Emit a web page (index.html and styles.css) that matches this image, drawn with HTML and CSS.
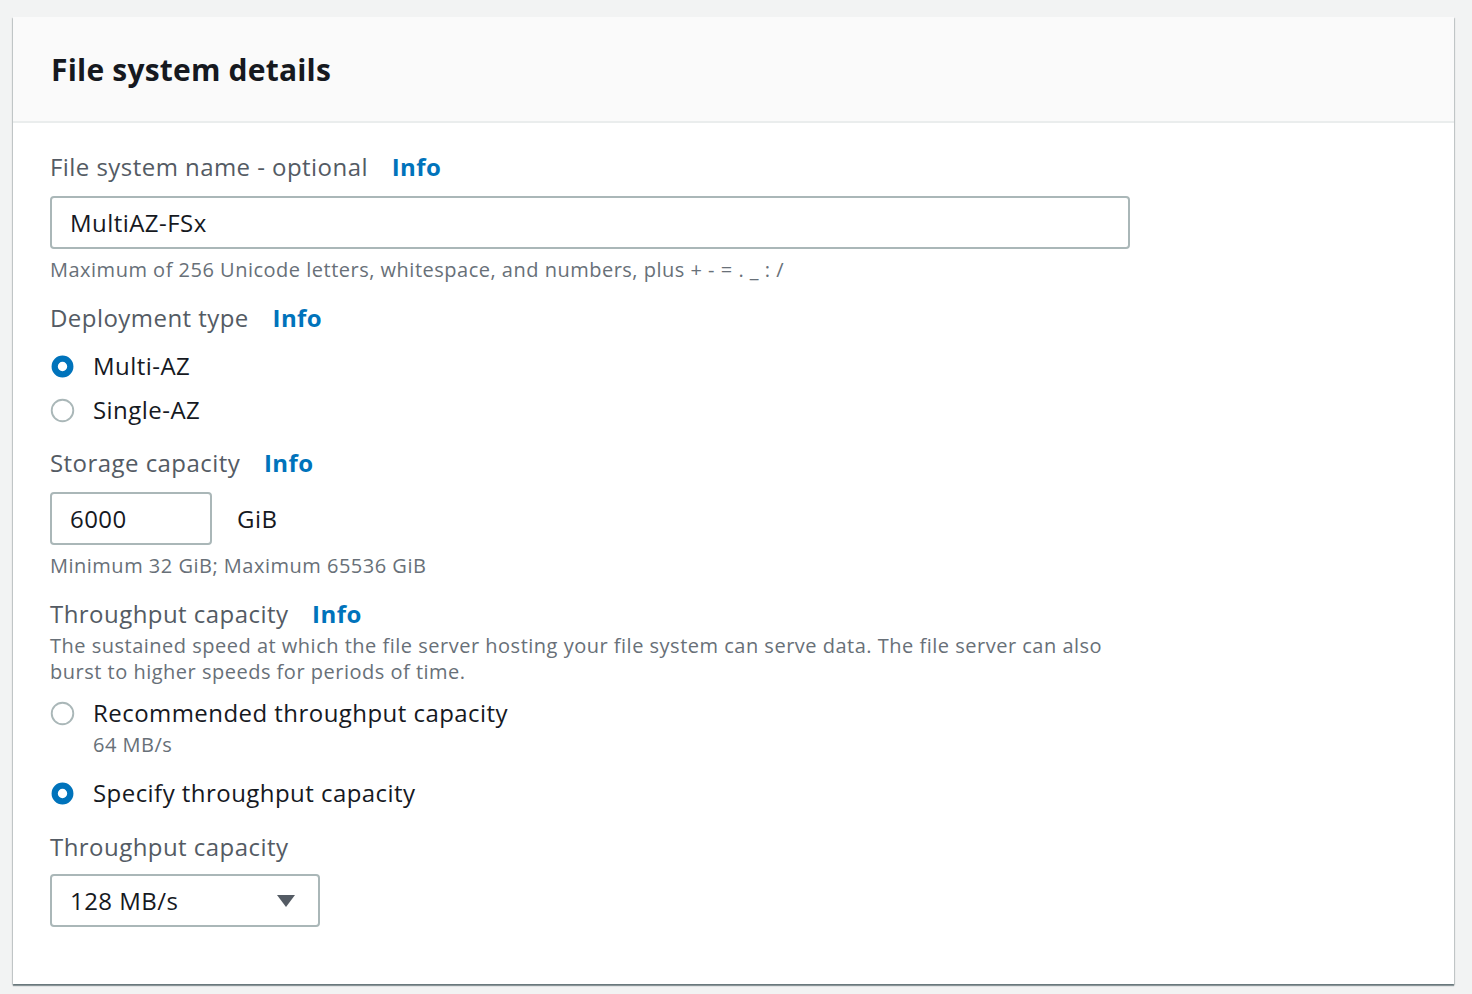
FILE: index.html
```html
<!DOCTYPE html>
<html lang="en">
<head>
    <meta charset="UTF-8">
    <title>File system details</title>
    <link rel="stylesheet" href="styles.css">
</head>
<body>
    <div class="card">
        <div class="card-header">
            <h2>File system details</h2>
        </div>
        <div class="card-body">
            <div class="field">
                <div class="field-label">File system name - optional <a class="info" href="#">Info</a></div>
                <div class="text-input wide">MultiAZ-FSx</div>
                <div class="hint">Maximum of 256 Unicode letters, whitespace, and numbers, plus + - = . _ : /</div>
            </div>

            <div class="field">
                <div class="field-label">Deployment type <a class="info" href="#">Info</a></div>
                <div class="radio-group">
                    <label class="radio">
                        <svg class="radio-icon" viewBox="0 0 16 16"><circle cx="8" cy="8" r="5" fill="#fff" stroke="#0073bb" stroke-width="4"/></svg>
                        <span>Multi-AZ</span>
                    </label>
                    <label class="radio">
                        <svg class="radio-icon" viewBox="0 0 16 16"><circle cx="8" cy="8" r="6.9" fill="#fff" stroke="#aab7b8" stroke-width="1.2"/></svg>
                        <span>Single-AZ</span>
                    </label>
                </div>
            </div>

            <div class="field">
                <div class="field-label">Storage capacity <a class="info" href="#">Info</a></div>
                <div class="input-row">
                    <div class="text-input narrow">6000</div>
                    <span class="unit">GiB</span>
                </div>
                <div class="hint">Minimum 32 GiB; Maximum 65536 GiB</div>
            </div>

            <div class="field">
                <div class="field-label">Throughput capacity <a class="info" href="#">Info</a></div>
                <div class="hint desc">The sustained speed at which the file server hosting your file system can serve data. The file server can also burst to higher speeds for periods of time.</div>
                <div class="radio-group">
                    <label class="radio">
                        <svg class="radio-icon" viewBox="0 0 16 16"><circle cx="8" cy="8" r="6.9" fill="#fff" stroke="#aab7b8" stroke-width="1.2"/></svg>
                        <span>Recommended throughput capacity
                            <span class="radio-sub">64 MB/s</span>
                        </span>
                    </label>
                    <label class="radio spaced">
                        <svg class="radio-icon" viewBox="0 0 16 16"><circle cx="8" cy="8" r="5" fill="#fff" stroke="#0073bb" stroke-width="4"/></svg>
                        <span>Specify throughput capacity</span>
                    </label>
                </div>
            </div>

            <div class="field">
                <div class="field-label plain">Throughput capacity</div>
                <div class="select">
                    <span>128 MB/s</span>
                    <svg class="caret" viewBox="0 0 20 14"><path d="M1 1h18L10 13z" fill="#545b64"/></svg>
                </div>
            </div>
        </div>
    </div>
</body>
</html>
```

FILE: styles.css
```css
* {
    margin: 0;
    padding: 0;
    box-sizing: border-box;
}

body {
    font-family: "Open Sans", "Noto Sans", Arial, sans-serif;
    background: #f2f3f3;
    color: #16191f;
    padding: 17px 18px 10px 13px;
}

.card {
    background: #fff;
    box-shadow: 0 2px 1px 0 rgba(0, 28, 36, 0.4), 1px 1px 1px 0 rgba(0, 28, 36, 0.15), -1px 1px 1px 0 rgba(0, 28, 36, 0.15);
}

.card-header {
    background: #fafafa;
    border-bottom: 2px solid #eaeded;
    height: 106px;
    padding: 0 38px;
    display: flex;
    align-items: center;
}

.card-header h2 {
    font-size: 30px;
    font-weight: 700;
    letter-spacing: 0.2px;
    margin-top: 0;
}

.card-body {
    padding: 28px 37px 57px;
}

.field {
    margin-bottom: 18px;
}

.field:last-child {
    margin-bottom: 0;
}

.field-label {
    font-size: 24px;
    line-height: 32px;
    letter-spacing: 0.45px;
    color: #545b64;
    margin-bottom: 13px;
}

.field-label.plain {
    margin-bottom: 11px;
}

.info {
    color: #0073bb;
    font-weight: 700;
    text-decoration: none;
    margin-left: 17px;
}

.text-input,
.select {
    border: 2px solid #aab7b8;
    border-radius: 4px;
    height: 53px;
    padding: 0 18px;
    display: flex;
    align-items: center;
    font-size: 24px;
    letter-spacing: 0.45px;
    color: #16191f;
}

.text-input.wide {
    width: 1080px;
}

.text-input.narrow {
    width: 162px;
}

.hint {
    font-size: 20px;
    line-height: 28px;
    letter-spacing: 0.5px;
    color: #687078;
    margin-top: 7px;
}

.hint.desc {
    line-height: 26px;
    margin-top: -10px;
    max-width: 1060px;
}

.input-row {
    display: flex;
    align-items: center;
}

.unit {
    font-size: 24px;
    letter-spacing: 0.45px;
    margin-left: 25px;
}

.field-label + .radio-group {
    margin-top: -3px;
    margin-bottom: -3px;
}

.hint + .radio-group {
    margin-top: 6px;
    margin-bottom: -2px;
}

.radio {
    display: flex;
    align-items: flex-start;
    font-size: 24px;
    line-height: 32px;
    letter-spacing: 0.45px;
    padding: 6px 0;
}

.radio.spaced {
    margin-top: 7px;
}

.radio-icon {
    width: 25px;
    height: 25px;
    margin: 4px 18px 0 0;
    flex-shrink: 0;
}

.radio-sub {
    display: block;
    font-size: 20px;
    line-height: 26px;
    letter-spacing: 0.5px;
    color: #687078;
    margin-top: 3px;
}

.select {
    width: 270px;
    justify-content: space-between;
    padding-right: 22px;
}

.caret {
    width: 20px;
    height: 14px;
}
```
